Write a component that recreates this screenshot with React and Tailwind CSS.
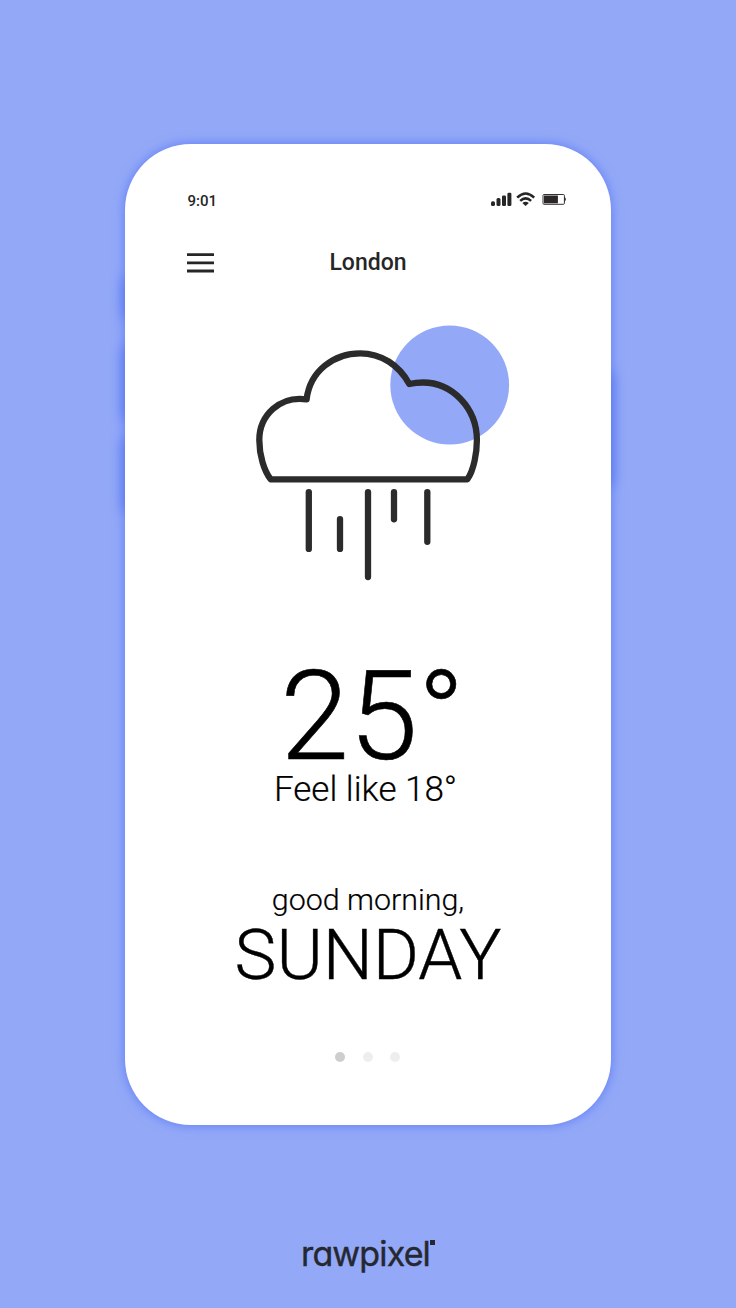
const INK = '#2b2b2b';

function StatusIcons() {
  return (
    <svg className="h-[16px] w-[78px]" viewBox="490 191 78 16">
      <g fill="#262626">
        <rect x="491" y="201.2" width="4" height="4.8" rx="1.6" />
        <rect x="496.5" y="198" width="4" height="8" rx="1.5" />
        <rect x="502" y="195.4" width="4" height="10.6" rx="1.3" />
        <rect x="507.4" y="192.8" width="4" height="13.2" rx="1.3" />
        <path d="M525.6 206 L522.4 202.9 Q525.6 200.4 528.8 202.9 Z" />
      </g>
      <g fill="none" stroke="#262626" strokeWidth="2.6">
        <path d="M517.2 197.6 Q525.6 189.4 534.2 197.6" />
        <path d="M520.2 200.9 Q525.6 195.9 531.1 200.9" />
      </g>
      <rect x="543" y="194.5" width="21.4" height="9.8" rx="1" fill="none" stroke="#333" strokeWidth="1" />
      <rect x="544" y="195.5" width="13.9" height="7.8" fill="#2b2627" />
      <path d="M564.4 196.7 Q567.4 199.2 564.4 201.9 Z" fill="#262626" />
    </svg>
  );
}

function RainCloud() {
  return (
    <svg className="h-[280px] w-[290px]" viewBox="240 310 290 280">
      <circle cx="449.7" cy="385" r="59.4" fill="#93a9f8" />
      <g fill="none" stroke={INK} strokeWidth="6.3">
        <path
          strokeLinejoin="round"
          d="M270.7 479.3 H467.4 C474 470 476.9 452 476.9 440 C476.9 408 452 382.5 423 382.5 Q416 382.5 409.3 384 C399 365 381 353.3 360.2 353.3 C334 353.3 310 371 306.6 399.3 C280 395.5 259.3 415 259.3 440 C259.3 455 264 471 270.7 479.3 Z"
        />
        <g strokeLinecap="round">
          <path d="M308.8 492.2 V548.9" />
          <path d="M340 519.1 V548.9" />
          <path d="M368 492.2 V577" />
          <path d="M394 492.2 V519.3" />
          <path d="M427.3 492.2 V541.8" />
        </g>
      </g>
    </svg>
  );
}

export default function App() {
  return (
    <main className="flex h-[1308px] w-[736px] flex-col items-center overflow-hidden bg-[#93a9f7] pt-36 font-['Roboto',sans-serif] text-black">
      <div className="relative h-[981px] w-[486px] shrink-0">
        <i className="absolute left-0 top-[137px] h-[34px] w-3 shadow-[0_0_12px_3px_#6480f2]" />
        <i className="absolute left-0 top-[206px] h-[66px] w-3 shadow-[0_0_12px_3px_#6480f2]" />
        <i className="absolute left-0 top-[298px] h-[66px] w-3 shadow-[0_0_12px_3px_#6480f2]" />
        <i className="absolute right-0 top-[232px] h-[106px] w-3 shadow-[0_0_12px_3px_#6480f2]" />
        <section className="relative flex h-full flex-col items-center rounded-[66px] bg-white pt-[47px] shadow-[0_0_12px_0px_#5f7bf6]">
          <div className="flex h-5 w-full items-start justify-between pl-[62.5px] pr-[43px]">
            <span className="text-[15px] font-medium leading-5 text-[#262626]">9:01</span>
            <StatusIcons />
          </div>
          <header className="mt-[37px] grid h-7 w-full grid-cols-[1fr_auto_1fr] items-start px-[62px]">
            <button className="mt-[4.5px] w-[27px]" aria-label="Menu">
              <svg className="block h-5 w-[27px]" viewBox="0 0 27 20" stroke="#262626" strokeWidth="2.8">
                <path d="M0 1.7 H27 M0 9.8 H27 M0 18 H27" />
              </svg>
            </button>
            <h1 className="mt-px text-[23px] font-medium leading-7 text-[#262626]">London</h1>
          </header>
          <div className="mt-[34px] pl-[34px]">
            <RainCloud />
          </div>
          <p className="mt-[69.5px] pl-[9px] text-[124px] font-light leading-[114px] [-webkit-text-stroke:0.6px_black]">25°</p>
          <p className="pr-[5px] text-[35px] font-light leading-8 [-webkit-text-stroke:0.2px_black]">Feel like 18°</p>
          <p className="mt-[76px] text-[30.4px] font-light leading-9 [-webkit-text-stroke:0.2px_black]">good morning,</p>
          <p className="mt-[1px] text-[70.5px] font-light leading-[72px] [-webkit-text-stroke:0.4px_black]">SUNDAY</p>
          <div className="mt-[61.5px] flex gap-[17.5px] pr-px">
            <i className="size-[10px] rounded-full bg-[#cecece]" />
            <i className="size-[10px] rounded-full bg-[#eeeeee]" />
            <i className="size-[10px] rounded-full bg-[#eeeeee]" />
          </div>
        </section>
      </div>
      <footer className="mt-[109px] flex items-start text-[#252830]">
        <span className="font-['Inter',sans-serif] text-[34px] font-normal leading-10 tracking-[-0.85px] [-webkit-text-stroke:0.4px_#252830] [font-feature-settings:'cv11','ss03']">rawpixel</span>
        <i className="mt-[6px] size-[5px] bg-[#252830]" />
      </footer>
    </main>
  );
}
